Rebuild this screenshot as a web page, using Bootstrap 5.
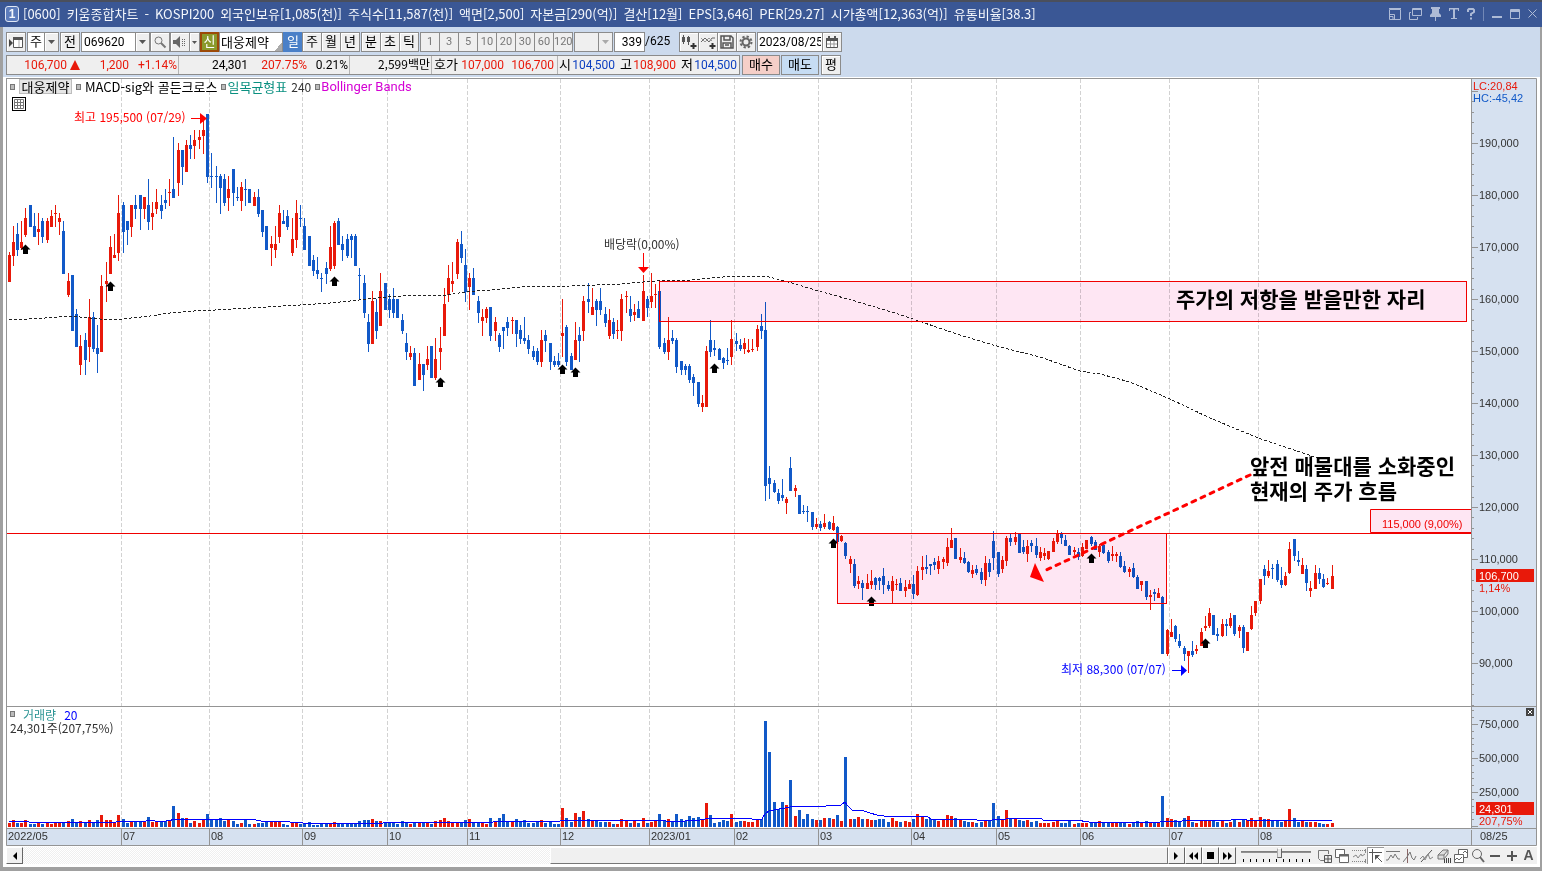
<!DOCTYPE html>
<html lang="ko">
<head>
<meta charset="utf-8">
<meta name="viewport" content="width=device-width, initial-scale=1">
<title>[0600] 키움종합차트</title>
<link href="https://cdn.jsdelivr.net/npm/bootstrap@5.3.0/dist/css/bootstrap.min.css" rel="stylesheet">
<style>
:root { --up:#e8190a; --down:#1159c8; --panel:#ccdaed; --axis:#d6e1f0; --rule:#949494; }
body { font-family:"Noto Sans CJK KR",sans-serif; font-size:13px; line-height:18px; color:#000; background:#fff; }
.win { border:solid #a0a0a0; border-width:0 2px 4px 3px; }
.titlebar { height:27px; margin:0 -2px 0 -3px; background:#3a5795; color:#f4f7fc; border-top:2px solid #4a4f5c; padding:0 5px 2px; }
.titlebar .cap { gap:6px; white-space:nowrap; }
.box-no { width:14px; height:16px; border:1px solid #dfe7f5; border-radius:3px; background:#5c7cbc; font:bold 12px/14px "Liberation Sans",sans-serif; text-align:center; }
.titlebar button { background:none; border:0; padding:0; line-height:0; color:#aebbd6; }
.tools { background:var(--panel); height:50px; padding:5px 3px 0; white-space:nowrap; }
.tools svg, .bottombar svg { display:block; margin:auto; flex:none; }
.row-a { margin-bottom:3px; }
.row-b { gap:1px; }
.bt { height:20px; padding:0 0 2px; border:1px solid #8b8b8b; border-radius:0; background:#efefef; font-size:13px; line-height:16px; color:#000; box-shadow:inset 1px 1px #fff; flex:none; overflow:hidden; }
.bt.j { margin-left:-1px; }
.bt.g, .fld.g { margin-left:1px; }
.bt:has(svg) { padding:0; }
.bt.on { background:#4a80c8; color:#fff; box-shadow:none; border-color:#4a80c8; }
.bt.off { color:#777; box-shadow:none; font-family:Roboto,sans-serif; font-size:11px; padding:0; }
.w20 { width:20px; } .w18 { width:18px; } .w15 { width:15px; } .w11 { width:11px; } .w38 { width:38px; }
.fld { height:20px; border:1px solid #8b8b8b; border-radius:0; background:#fff; padding:0 2px; font-family:Roboto,"Noto Sans CJK KR",sans-serif; font-size:12px; line-height:18px; color:#000; flex:none; appearance:none; }
.fld.name { width:64px; font-size:13px; padding:0 1px 2px; background:linear-gradient(135deg,#fff 50%,#aaa 50%) 100% 100%/8px 8px no-repeat #fff; }
.bt.new { width:19px; border:2px solid #9c4a08; background:#8a9a2c; color:#fff; box-shadow:none; line-height:14px; }
.quote { width:734px; height:20px; border:1px solid #8b8b8b; background:#efefef; line-height:16px; margin-right:1px; }
.quote > div { display:flex; border-right:1px solid #b4b4b4; height:100%; flex:none; }
.quote > div:last-child { border:0; }
.quote span { text-align:right; flex:none; }
.quote .fig, .total { font-family:Roboto,"Noto Sans CJK KR",sans-serif; font-size:12px; line-height:18px; }
.up { color:var(--up); } .dn { color:#0c3fc0; }
.frame { margin:0 3px; position:relative; }
.frame > svg { display:block; width:100%; height:auto; }
.legend-row { position:absolute; left:4px; top:2px; gap:4px; line-height:14px; }
.sq { width:5px; height:6px; border:1px solid #777; background:#bbb; flex:none; }
.legend-row button { border:1px solid #bdbdbd; background:#e6e6e6; padding:0 1px; line-height:13px; font-size:13px; height:15px; width:53px; }
.ma { color:#333; font-size:12px; }
.gridbtn { position:absolute; left:6px; top:20px; width:14px; height:14px; border:1px solid #000; background:#fff; padding:1px; line-height:0; }
.volhead { position:absolute; left:4px; top:82%; line-height:13px; font-size:12px; }
.cl { position:absolute; right:3px; top:82%; width:8px; height:8px; border:0; background:#444; padding:0; line-height:0; }
.bottombar { height:17px; margin:1px 3px 3px; background:#f0f0f0; }
.track { background:repeating-conic-gradient(#efefef 0 25%,#fff 0 50%) 0 0/2px 2px; display:flex; }
.track .thumb { width:54%; margin-left:auto; background:#f0f0f0; border:1px solid; border-color:#fff #777 #777 #fff; }
.sb { width:17px; height:17px; padding:0; background:#f0f0f0; border:1px solid; border-color:#fff #666 #666 #fff; flex:none; line-height:0; }
.ic { width:17px; height:17px; padding:0; border:0; background:none; flex:none; line-height:0; }
.ic.pressed { background:#fff; border-left:1px solid #999; border-top:1px solid #999; }
.zoomer { width:80px; padding:1px 5px 0; }
.zoomer input { appearance:none; display:block; width:70px; height:10px; margin:0; background:linear-gradient(#777,#999) 0 3px/100% 2px no-repeat; }
.zoomer input::-webkit-slider-thumb { appearance:none; width:5px; height:10px; background:#e8e8e8; border:1px solid; border-color:#fff #666 #666 #aaa; }
.ticks { height:3px; margin:1px 1px 0 2px; display:flex; justify-content:space-between; }
.ticks i { width:1px; background:#000; }
svg text { font-size:12px; white-space:pre; }
svg .fig { font-family:"Liberation Sans",sans-serif; font-size:11px; }
svg .note { font:bold 21px "Noto Sans CJK KR",sans-serif; }
</style>
</head>
<body>
<div class="win">
  <header class="titlebar d-flex align-items-center">
    <span class="box-no me-1">1</span>
    <div class="cap d-flex flex-grow-1 overflow-hidden">
      <span>[0600]</span><span>키움종합차트</span><span>-</span><span>KOSPI200</span><span>외국인보유[1,085(천)]</span><span>주식수[11,587(천)]</span><span>액면[2,500]</span><span>자본금[290(억)]</span><span>결산[12월]</span><span>EPS[3,646]</span><span>PER[29.27]</span><span>시가총액[12,363(억)]</span><span>유통비율[38.3]</span>
    </div>
    <div class="d-flex align-items-center gap-2">
      <button aria-label="크기"><svg width="12" height="12" fill="none" stroke="currentColor"><path d="M.5 1.500h11v10H.5zM0 .5h12M.5 6.500h5v5" /><path d="M1 8.500h3v3" /></svg></button>
      <button aria-label="복제"><svg width="13" height="12" fill="none" stroke="currentColor"><path d="M3.500.5h9v7h-9zM3 1.500h10M2 4.500H.5v7h8V9" /></svg></button>
      <button aria-label="고정"><svg width="11" height="14" fill="currentColor"><path d="M1 0h9v2H9v4l2 2v2H6v4H5v-4H0V8l2-2V2H1z" /></svg></button>
      <button aria-label="글꼴"><svg width="10" height="12" fill="currentColor"><path d="M0 0h10v3H9V1.500H6V10h2v1H2v-1h2V1.500H1V3H0z" /></svg></button>
      <button aria-label="도움말"><svg width="8" height="12" fill="none" stroke="currentColor" stroke-width="2"><path d="M1 4V2l1-1h4l1 1v2L4 6v2M4 9.500v2" /></svg></button>
      <svg width="1" height="14"><path d="M.5 0v14" stroke="#7288b6"/></svg>
      <button aria-label="최소화"><svg width="10" height="10" fill="currentColor"><path d="M0 7h10v2H0z" /></svg></button>
      <button aria-label="최대화"><svg width="10" height="10" fill="none" stroke="currentColor"><path d="M.5.5h9v9h-9zM0 1.500h10M0 2.500h10" /></svg></button>
      <button aria-label="닫기"><svg width="9" height="9" stroke="currentColor"><path d="M.5.5l8 8M8.500.5l-8 8" /></svg></button>
    </div>
  </header>

  <div class="tools">
    <div class="row-a d-flex">
      <button class="bt w20" aria-label="패널"><svg width="14" height="14"><path d="M4.500 2.500h9v10h-9z" fill="#fff" stroke="#555"/><path d="M4 2h10v3H4z" fill="#555"/><path d="M10 5v7" stroke="#aaa"/><path d="M0 4l4 4-4 4z" fill="#444"/></svg></button>
      <button class="bt g w18 bg-white">주</button><button class="bt j w15" aria-label="종류"><svg width="7" height="4"><path d="M0 0h7L3.500 4z" fill="#555"/></svg></button>
      <button class="bt g w20">전</button>
      <input class="fld g" style="width:55px" value="069620" aria-label="종목코드"><button class="bt j w15" aria-label="종목 목록"><svg width="7" height="4"><path d="M0 0h7L3.500 4z" fill="#555"/></svg></button>
      <button class="bt w20" aria-label="검색"><svg width="14" height="14" fill="none" stroke="#777"><circle cx="5.500" cy="5.500" r="3.500"/><path d="M8 8l4.500 4.500" stroke-width="2"/></svg></button>
      <button class="bt w20" aria-label="소리"><svg width="14" height="12"><path d="M0 4h3l4-4v12L3 8H0z" fill="#666"/><path d="M9.500 3v7M11.500 3v7" stroke="#666" stroke-dasharray="1 1"/></svg></button><button class="bt j w11" aria-label="소리 메뉴"><svg width="5" height="3"><path d="M0 0h5L2.500 3z" fill="#555"/></svg></button>
      <button class="bt new">신</button><input class="fld name" value="대웅제약" aria-label="종목명">
      <button class="bt w20 on">일</button><button class="bt j w20">주</button><button class="bt j w20">월</button><button class="bt j w20">년</button>
      <button class="bt g w20">분</button><button class="bt j w20">초</button><button class="bt j w20">틱</button>
      <button class="bt g w20 off">1</button><button class="bt j w20 off">3</button><button class="bt j w20 off">5</button><button class="bt j w20 off">10</button><button class="bt j w20 off">20</button><button class="bt j w20 off">30</button><button class="bt j w20 off">60</button><button class="bt j w20 off">120</button>
      <select class="fld g" style="width:25px;background:#efefef" aria-label="주기" disabled><option></option></select><button class="bt j w15 off" aria-label="주기 목록"><svg width="7" height="4"><path d="M0 0h7L3.500 4z" fill="#aaa"/></svg></button>
      <input class="fld g text-end" style="width:31px" value="339" aria-label="표시 개수"><span class="total" style="width:34px">/625</span>
      <button class="bt w20" aria-label="봉 추가"><svg width="16" height="16"><path d="M2.500 1v9M7.500 2v9" stroke="#555"/><path d="M1 3h3v5H1zM6 3h3v5H6z" fill="#555"/><path d="M12.500 9v6M9.500 12h6" stroke="#333" stroke-width="2"/></svg></button><button class="bt j w20" aria-label="지표 추가"><svg width="16" height="16" fill="none"><path d="M1 8l4-4 4 4 3-4 3 0" stroke="#666"/><path d="M1 4l4 4 4-4 3 3" stroke="#999"/><path d="M12.500 9v6M9.500 12h6" stroke="#333" stroke-width="2"/></svg></button><button class="bt j w20" aria-label="저장"><svg width="14" height="14" fill="none" stroke="#555"><path d="M1 1h10l2 2v10H1zM4 1v4h6V1M3 13V8h8v5M5 10h4" stroke-width="1.500"/></svg></button><button class="bt j w20" aria-label="설정"><svg width="14" height="14" fill="none" stroke="#666"><circle cx="7" cy="7" r="3.500" stroke-width="2"/><circle cx="7" cy="7" r="5.500" stroke-width="2" stroke-dasharray="2.300 2"/></svg></button>
      <input class="fld g" style="width:66px;padding:0 1px" value="2023/08/25" aria-label="날짜"><button class="bt j w20" aria-label="달력"><svg width="12" height="12"><path d="M.5 2.500h11v9H.5z" fill="#fff" stroke="#555"/><path d="M0 2h12v3H0zM2 0h2v3H2zM8 0h2v3H8z" fill="#555"/><path d="M4.500 5v6M8 5v6M1 8h10" stroke="#999"/></svg></button>
    </div>
    <div class="row-b d-flex">
      <div class="quote d-flex">
        <div style="width:172px"><span class="up fig" style="width:60px">106,700</span><svg class="m-0 align-self-center" width="14" height="10"><path d="M3 10h10L8 0z" fill="#e8190a"/></svg><span class="up fig" style="width:48px">1,200</span><span class="up fig" style="width:48px">+1.14%</span></div>
        <div style="width:171px"><span class="fig" style="width:69px">24,301</span><span class="up fig" style="width:59px">207.75%</span><span class="fig" style="width:41px">0.21%</span></div>
        <div style="width:82px"><span style="width:80px;font-size:12px">2,599백만</span></div>
        <div style="width:126px"><span style="width:26px">호가</span><span class="up fig" style="width:46px">107,000</span><span class="up fig" style="width:50px">106,700</span></div>
        <div><span style="width:13px">시</span><span class="dn fig" style="width:44px">104,500</span><span style="width:17px">고</span><span class="up fig" style="width:44px">108,900</span><span style="width:17px">저</span><span class="dn fig" style="width:44px">104,500</span></div>
      </div>
      <button class="bt w38 shadow-none" style="background:#f5cfc8">매수</button>
      <button class="bt w38 shadow-none" style="background:#c6dcf3">매도</button>
      <button class="bt g w20">평</button>
    </div>
  </div>

  <main class="frame">
    <svg id="chart" viewBox="6 77 1531 769" role="img" aria-label="대웅제약 일봉 차트"></svg>
    <div class="legend-row d-flex align-items-center">
      <i class="sq"></i><button>대웅제약</button><i class="sq"></i><span>MACD-sig와 골든크로스</span><i class="sq"></i><span style="color:#0a9080;margin-left:-3px">일목균형표</span><span class="ma">240</span><i class="sq"></i><span style="color:#d400d4;margin-left:-3px;font-family:Roboto,sans-serif">Bollinger Bands</span>
    </div>
    <button class="gridbtn" aria-label="표"><svg width="10" height="10" fill="none" stroke="#777"><path d="M.5.5h9v9h-9zM3.500 0v10M6.500 0v10M0 3.500h10M0 6.500h10"/></svg></button>
    <div class="volhead">
      <div class="d-flex align-items-center"><i class="sq me-2"></i><span style="color:#2a9494;margin-right:8px">거래량</span><span style="color:#00f">20</span></div>
      <div style="color:#333">24,301주(207,75%)</div>
    </div>
    <button class="cl" aria-label="닫기"><svg width="8" height="8" stroke="#fff"><path d="M2 2l4 4M6 2l-4 4"/></svg></button>
  </main>

  <footer class="bottombar d-flex">
    <button class="sb" aria-label="왼쪽"><svg width="5" height="8"><path d="M5 0v8L1 4z"/></svg></button>
    <div class="track flex-grow-1"><div class="thumb"></div></div>
    <button class="sb" aria-label="오른쪽"><svg width="5" height="8"><path d="M0 0v8l4-4z"/></svg></button>
    <button class="sb" aria-label="처음"><svg width="9" height="8"><path d="M4 0v8L0 4zM9 0v8L5 4z"/></svg></button>
    <button class="sb" aria-label="정지"><svg width="7" height="7"><path d="M0 0h7v7H0z"/></svg></button>
    <button class="sb" aria-label="끝"><svg width="9" height="8"><path d="M0 0v8l4-4zM5 0v8l4-4z"/></svg></button>
    <div class="zoomer"><input type="range" value="56" aria-label="확대"><div class="ticks"><i></i><i></i><i></i><i></i><i></i><i></i><i></i><i></i><i></i><i></i><i></i></div></div>
    <button class="ic" aria-label="추가"><svg width="14" height="14" fill="none" stroke="#777"><path d="M6 11.500H2.500l-2-2V1.500h10V5" /><path d="M6.500 6.500h7v7h-7zM10 6.500v7M6.500 10h7" stroke="#555"/></svg></button>
    <button class="ic" aria-label="겹치기"><svg width="14" height="14" fill="#fff" stroke="#666"><path d="M.5.5h9v8h-9z"/><path d="M4.500 5.500h9v8h-9z"/><path d="M4 6.500h10" stroke-width="2"/></svg></button>
    <button class="ic" aria-label="범위"><svg width="14" height="14" fill="none" stroke="#888"><path d="M0 1.500h14M0 12.500h14" stroke-dasharray="1 1"/><path d="M13.500 0v4M13.500 10v4M1 8l3-2 2 3 3-4 1 2 3-2"/></svg></button>
    <button class="ic pressed" aria-label="선택"><svg width="14" height="14" fill="none" stroke="#555"><path d="M0 3.500h13M3.500 0v14M7 7l6 6"/><path d="M6 6h5l-5 5z" fill="#555" stroke="none"/></svg></button>
    <button class="ic" aria-label="수평선"><svg width="14" height="14" fill="none" stroke="#777"><path d="M0 2.500h14"/><path d="M0 11h2l3-5 2 3 2-4 3 5h2"/></svg></button>
    <button class="ic" aria-label="수직선"><svg width="14" height="14" fill="none" stroke="#777"><path d="M4.500 0v14" stroke="#866"/><path d="M0 13l4-5 3-5 2 6 2 2 2-4"/></svg></button>
    <button class="ic" aria-label="추세선"><svg width="14" height="14" fill="none" stroke="#888"><path d="M1 13L12 1" stroke="#555"/><path d="M0 10l3-3 2 4 3-6 2 5 3-2"/></svg></button>
    <button class="ic" aria-label="모두 지우기"><svg width="14" height="14" fill="#ddd" stroke="#777"><path d="M1 6l5-5h5L7 6zM1 6v4h6V6M7 10l4-5V1"/><path d="M7.500 14v-4M9.500 9v5M11.500 9v5M13.500 9v5" stroke="#444"/></svg></button>
    <button class="ic" aria-label="차트 복사"><svg width="14" height="14" fill="#fff" stroke="#666"><path d="M4.500.5h9v8h-9z"/><path d="M.5 5.500h9v8h-9z"/><path d="M1 11l2-2 2 2 3-3M9 4l2-2 2 2" fill="none"/></svg></button>
    <button class="ic" aria-label="돋보기"><svg width="14" height="14" fill="none" stroke="#666"><circle cx="6" cy="5" r="4.500"/><path d="M9 8l4 5" stroke-width="2"/></svg></button>
    <button class="ic" aria-label="축소"><svg width="10" height="10"><path d="M0 4h10v2H0z" fill="#555"/></svg></button>
    <button class="ic" aria-label="확대"><svg width="10" height="10"><path d="M0 4h10v2H0zM4 0h2v10H4z" fill="#555"/></svg></button>
    <button class="ic" aria-label="자동" style="font:bold 14px/17px 'Liberation Sans',sans-serif;color:#555">A</button>
  </footer>
</div>

<script>
// One candle per entry: x high bodyTop bodyBottom low direction volume
const days = `9 252 255 282 282 r 4;13 226 242 256 266 r 7;17 223 234 250 256 b 4;21 221 242 248 250 r 4;25 208 218 235 237 r 7;30 205 205 227 227 b 3;34 213 226 237 237 b 3;38 213 229 232 245 r 5;42 218 221 237 243 b 3;47 218 221 240 243 r 5;51 210 216 227 227 r 3;55 205 213 214 227 r 4;59 213 218 222 235 r 4;63 221 231 274 274 b 5;68 273 281 295 297 r 6;72 275 275 331 331 b 8;76 309 314 347 347 b 5;80 335 346 365 375 r 6;85 333 340 360 375 b 5;89 299 317 347 362 r 7;93 312 317 349 352 b 5;97 325 348 354 373 b 7;101 275 286 352 352 r 12;106 262 281 284 302 r 7;110 236 247 274 274 r 7;114 234 255 258 258 r 5;118 195 213 253 261 r 12;123 202 205 232 253 b 8;127 221 221 230 245 b 4;131 205 205 227 237 r 6;135 195 205 209 219 b 5;140 195 195 209 230 b 5;144 197 197 209 219 r 6;148 179 205 222 230 b 10;152 202 213 217 230 r 5;156 189 202 209 214 r 6;161 195 205 211 219 b 6;165 189 200 203 209 b 6;169 179 192 193 206 r 6;173 137 189 198 198 b 21;178 143 150 183 196 r 14;182 150 150 167 185 b 9;186 140 145 172 172 r 9;190 135 145 149 159 b 4;194 130 140 146 159 r 6;199 130 137 140 149 r 4;203 121 130 136 154 r 7;207 114 114 177 183 b 13;211 153 176 177 188 b 8;216 166 176 177 203 b 8;220 174 176 188 214 b 9;224 174 179 203 206 b 6;228 176 189 198 211 r 7;233 169 169 193 206 b 6;237 187 197 198 201 b 3;241 182 187 201 211 r 4;245 179 189 190 206 b 7;249 189 189 203 203 b 3;254 192 197 206 206 r 3;258 189 197 214 217 b 4;262 210 210 232 237 b 4;266 226 226 250 250 b 6;271 236 244 248 266 r 6;275 226 244 250 258 r 6;279 205 213 237 243 r 6;283 210 221 224 224 b 3;287 210 216 227 230 b 2;292 218 239 253 256 r 4;296 200 213 240 248 r 4;300 205 218 219 227 b 3;304 218 226 250 250 b 4;309 236 236 266 266 b 5;313 255 260 271 276 b 2;317 257 270 274 279 b 2;321 273 278 279 292 b 4;326 262 268 274 284 b 4;330 226 247 269 271 r 4;334 221 223 266 269 r 5;338 218 221 245 245 b 4;342 236 244 250 261 b 4;347 234 239 256 258 b 4;351 234 236 240 258 b 4;355 234 236 266 266 b 4;359 268 275 276 300 b 6;364 275 283 313 318 b 7;368 314 322 344 352 b 7;372 291 301 344 344 r 8;376 299 312 331 339 b 6;380 273 291 326 326 r 6;385 283 283 310 310 b 5;389 294 299 310 318 b 4;393 288 299 313 318 b 4;397 299 299 318 318 b 3;402 314 320 331 334 b 6;406 333 343 352 360 b 5;410 346 353 357 360 r 3;414 348 353 386 386 b 4;419 353 364 380 380 r 4;423 364 364 375 391 b 4;427 346 359 365 370 r 5;431 346 346 378 378 b 3;435 338 359 378 380 r 6;440 327 348 352 370 r 7;444 288 304 336 336 r 9;448 265 278 295 302 r 6;452 262 281 284 292 r 5;457 239 242 274 279 r 5;461 231 244 258 263 b 5;465 249 265 292 302 b 7;469 273 278 287 310 r 8;473 268 278 295 295 b 5;478 296 301 313 323 b 5;482 309 317 321 336 r 4;486 307 309 318 323 r 3;490 307 307 336 341 b 9;495 317 322 331 341 r 6;499 333 335 347 352 b 9;503 327 327 331 349 b 13;507 317 322 328 336 b 6;512 317 320 321 334 r 5;516 320 320 334 347 b 8;520 325 330 339 344 b 6;524 317 338 341 344 b 7;528 335 340 349 354 b 4;533 346 351 357 360 b 4;537 348 351 362 365 b 6;541 330 340 362 367 r 7;545 330 335 341 352 b 4;550 343 343 362 370 b 5;554 356 361 365 367 b 3;558 353 361 365 367 b 3;562 299 333 336 357 r 19;566 325 327 362 366 b 9;571 353 356 370 370 b 5;575 322 340 360 360 r 14;579 327 335 341 362 b 10;583 296 301 331 341 r 16;588 283 299 302 313 b 8;592 288 307 315 315 r 7;596 299 301 310 326 b 6;600 288 301 310 315 b 5;605 307 314 323 327 b 5;609 309 320 336 339 r 5;613 318 322 334 339 b 3;617 320 330 331 339 r 3;621 294 299 331 341 r 8;626 291 296 297 313 r 7;630 296 309 316 322 b 4;634 304 312 315 321 r 6;638 301 309 318 318 b 4;643 275 291 321 321 r 9;647 296 299 308 317 b 4;651 273 296 302 308 r 5;655 284 294 295 308 r 6;659 291 291 347 349 b 13;664 338 343 352 354 b 7;668 317 340 352 360 r 8;672 330 338 341 344 b 5;676 338 340 367 373 b 13;681 361 361 370 375 b 8;685 364 366 370 375 b 6;689 364 366 380 383 b 11;693 374 377 383 396 b 9;698 382 382 404 407 b 10;702 395 403 407 412 r 8;706 346 351 407 407 r 24;710 320 340 352 357 b 12;714 340 348 350 356 b 4;719 348 349 360 360 b 5;723 357 358 363 369 b 7;727 348 360 361 365 b 6;731 320 339 357 365 r 13;736 333 341 344 351 b 5;740 339 345 349 351 b 6;744 338 343 349 354 r 6;748 339 350 352 353 r 5;752 339 349 350 352 r 5;757 325 329 347 351 r 7;761 314 326 331 339 b 8;765 302 330 486 501 b 106;769 466 478 484 499 b 75;774 480 483 492 493 b 25;778 489 493 501 504 b 18;782 479 495 498 501 b 25;786 497 499 503 514 r 22;790 457 468 491 491 b 47;795 485 488 491 497 r 11;799 495 495 514 514 b 17;803 505 511 512 514 b 8;807 506 511 512 522 b 13;812 512 512 527 530 b 8;816 518 524 527 529 r 7;820 521 524 528 531 b 7;824 514 523 527 529 r 9;829 521 522 529 530 b 9;833 516 523 530 531 r 8;837 526 527 542 542 b 12;841 535 536 541 542 r 6;845 542 543 556 559 b 70;850 556 559 564 573 r 8;854 559 564 586 588 b 8;858 576 581 584 589 r 10;862 580 583 588 600 b 8;867 574 583 589 589 r 8;871 570 581 585 589 r 7;875 577 578 585 590 b 7;879 577 578 581 590 b 8;883 568 576 585 594 b 8;888 581 585 589 591 b 5;892 576 581 591 604 r 9;896 579 584 585 590 r 6;900 578 583 591 591 b 5;905 580 587 591 597 r 6;909 580 584 589 589 r 5;913 575 584 594 599 b 8;917 566 571 595 596 r 13;922 556 567 570 580 r 11;926 555 567 569 574 b 8;930 564 564 566 575 b 8;934 558 562 565 570 b 8;938 556 561 569 574 r 6;943 557 559 562 569 r 7;947 538 547 563 566 r 12;951 528 540 548 548 r 11;955 538 538 559 559 b 9;960 548 557 560 563 r 8;964 552 558 563 564 b 6;968 561 562 572 573 b 5;972 565 570 574 578 r 5;976 565 569 573 575 b 4;981 568 572 580 584 b 5;985 556 563 580 586 r 6;989 559 563 572 577 b 6;993 531 541 558 570 b 24;998 552 552 574 577 b 11;1002 556 560 569 573 r 8;1006 536 538 561 566 r 17;1010 534 538 542 546 b 8;1015 532 537 542 545 r 8;1019 533 533 553 553 b 7;1023 540 547 552 554 b 6;1027 540 546 554 562 r 7;1031 540 543 546 552 b 5;1036 538 546 555 558 b 6;1040 547 552 558 561 r 4;1044 548 553 556 560 r 4;1048 551 551 559 560 r 4;1053 538 541 552 552 r 5;1057 530 534 542 544 r 6;1061 532 533 538 544 b 4;1065 535 540 546 546 b 4;1069 545 546 555 555 b 6;1074 547 550 552 555 r 3;1078 548 552 557 560 b 4;1082 543 547 556 557 r 4;1086 540 540 549 549 r 4;1091 536 537 544 546 b 5;1095 540 542 550 550 b 4;1099 544 546 552 557 r 6;1103 544 545 553 554 b 4;1108 550 552 561 563 b 5;1112 546 554 556 561 r 4;1116 552 554 556 562 r 4;1120 552 556 567 568 b 4;1124 561 566 572 573 b 4;1129 567 569 572 577 r 3;1133 563 568 577 578 b 5;1137 575 577 589 589 b 6;1141 581 581 585 591 r 4;1146 581 581 597 600 b 6;1150 590 595 597 610 r 5;1154 589 592 594 601 b 4;1158 588 593 598 598 r 4;1162 596 597 654 654 b 31;1167 629 630 654 656 r 9;1171 619 632 637 637 r 8;1175 625 626 639 642 b 7;1179 634 641 646 648 b 6;1184 646 648 654 661 b 9;1188 651 651 656 673 r 11;1192 641 651 655 657 b 5;1196 645 649 651 654 r 4;1201 628 632 646 646 r 6;1205 616 626 628 631 r 6;1209 608 613 626 628 r 6;1213 615 615 635 635 b 6;1217 628 634 636 641 b 5;1222 619 624 636 637 r 7;1226 619 624 626 636 b 4;1230 613 618 626 628 r 5;1234 615 615 634 636 b 8;1239 625 627 631 638 r 5;1243 625 627 648 653 b 8;1247 632 632 651 651 r 7;1251 606 615 629 630 r 9;1255 601 601 613 616 r 7;1260 579 579 601 604 r 10;1264 565 569 576 585 b 8;1268 560 571 576 578 r 8;1272 564 568 569 579 b 6;1277 560 564 580 582 b 6;1281 567 580 585 588 b 5;1285 572 576 585 586 r 7;1289 542 549 573 574 r 18;1294 539 539 556 561 b 9;1298 551 560 562 566 b 5;1302 558 565 574 574 r 6;1306 565 569 583 591 b 5;1310 581 588 591 597 r 5;1315 565 573 589 589 r 5;1319 568 573 579 584 b 4;1323 574 579 587 588 b 3;1327 578 583 584 585 r 3;1332 565 576 589 589 r 4`.split(';').map(s => s.split(' '));
const months = {121:'07',209:'08',302:'09',387:'10',467:'11',560:'12',649:'2023/01',734:'02',818:'03',911:'04',996:'05',1080:'06',1169:'07',1258:'08'};
const color = {r:'#e8190a', b:'#1159c8'};
const rect = (x,y,w,h,f,extra='') => `<rect x="${x}" y="${y}" width="${w}" height="${h}" fill="${f}" ${extra}/>`;
const text = (x,y,s,f,cls='') => `<text x="${x}" y="${y}" fill="${f}" class="${cls}">${s}</text>`;
let g = rect(6,77,1531,769,'#fff') + rect(1471,79,65,767,'#d6e1f0') + rect(6,829,1530,17,'#d6e1f0');

for (const x in months) g += `<path d="M${+x + .5} 79V827" stroke="#d2d2d2" stroke-dasharray="4 2"/>`;
g += '<g shape-rendering="crispEdges">';
for (const [x,h,t,b,l,d,v] of days) {
  g += rect(x,h,1,l-h,color[d]) + rect(x-1,t,3,b-t,color[d]) + rect(x-1,827-v,3,v,color[d]);
}
g += '<polyline fill="none" stroke="#222" stroke-dasharray="3 2" points="9,320 45,318 70,316 80,317 100,319 122,319 150,316 170,313 194,311 215,310 250,308 300,305 330,303 350,301 386,297 420,295 447,295 465,292 490,290 520,287 570,286 620,284 655,281 690,280 710,278 736,276 765,276 785,281 815,290 855,301 898,314 960,335 1000,347 1040,357 1080,371 1100,374 1130,382 1170,399 1210,418 1258,438 1300,452 1320,459"/>';
g += '<polyline fill="none" stroke="#00f" points="9,821 28,821 29,822 53,822 54,823 70,822 116,822 117,821 146,821 147,820 155,821 166,821 177,819 196,820 205,819 251,819 261,821 289,821 290,822 303,823 383,823 384,822 493,822 494,821 560,821 561,820 665,820 666,821 685,821 700,820 710,818 751,818 752,819 762,819 765,814 769,811 790,807 798,806 826,806 841,805 845,802 848,806 852,810 864,811 870,813 877,815 884,816 927,816 931,819 943,820 946,819 974,819 977,820 992,820 1020,818 1042,819 1043,820 1076,820 1089,822 1140,822 1158,823 1162,821 1182,821 1183,820 1231,820 1233,819 1245,819 1247,820 1270,820 1272,821 1280,820 1332,820"/></g>';
// golden-cross markers
for (const [x,y] of [[25,245],[110,282],[334,277],[440,378],[562,365],[575,368],[714,364],[833,539],[871,597],[1091,554],[1205,639]])
  g += `<path d="M${x+.5} ${y-.5}l5 5h-2.500v4.500h-5v-4.500h-2.500z"/>`;

// supply zones and resistance line
for (const [x,y,w,h] of [[659.5,281.5,807,40],[837.5,533.5,329,70]])
  g += rect(x,y,w,h,'#fee6f3','style="mix-blend-mode:multiply"') + rect(x,y,w,h,'none','stroke="#f00000"');
g += '<path d="M6 533.500H1471" stroke="#f00000"/>';
g += '<path d="M1471 509.500H1370.500V532.500H1471" fill="#fee6f3" stroke="#f00000"/>' + text(1382,528,'115,000 (9,00%)','#f00000','fig');
g += '<path d="M1250 475L1042 572" stroke="#f00" stroke-width="3" stroke-dasharray="4 6" stroke-linecap="round"/><path d="M1035 563l-5 14 14 5z" fill="#f00"/>';
g += text(1176,307,'주가의 저항을 받을만한 자리','#000','note') + text(1250,474,'앞전 매물대를 소화중인','#000','note') + text(1250,499,'현재의 주가 흐름','#000','note');
g += text(74,122,'최고 195,500 (07/29)','#f00') + '<path d="M191 118.500h10" stroke="#f00"/><path d="M200 113l7 5.500-7 5.500z" fill="#f00"/>';
g += text(1061,674,'최저 88,300 (07/07)','#00f') + '<path d="M1172 670.500h10" stroke="#00f"/><path d="M1181 665l6 5.500-6 5.500z" fill="#00f"/>';
g += text(604,249,'배당락(0,00%)','#333') + '<path d="M643.500 253v15" stroke="#f00"/><path d="M638 267h11l-5.500 6z" fill="#f00"/>';

// frame and axes
g += '<g stroke="#949494" fill="none"><path d="M6 78.500H1536.500V845.500H6.500V78.500M6 706.500H1536M6 828.500H1536M1471.500 78V828M1471.500 830V845"/>';
for (const x in months) g += `<path d="M${+x + .5} 829V845"/>`;
for (let i = -5; i < 55; i++) { const y = Math.round(143 + i*10.4) + .5; g += `<path d="M1472 ${y}h${i%5 ? 2 : 6}"/>`; }
for (let i = -2; i < 16; i++) { const y = Math.round(724 + i*6.8) + .5; g += `<path d="M1472 ${y}h${i%5 ? 2 : 6}"/>`; }
g += '</g>';
for (let i = 0; i < 11; i++) g += text(1479,147+i*52,(190-i*10)+',000','#333','fig');
g += text(1479,728,'750,000','#333','fig') + text(1479,762,'500,000','#333','fig') + text(1479,796,'250,000','#333','fig');
g += text(1473,90,'LC:20,84','#e8190a','fig') + text(1473,102,'HC:-45,42','#1159c8','fig');
g += text(1479,592,'1,14%','#e8190a','fig') + rect(1476,569,58,13,'#e8190a') + text(1479,580,'106,700','#fff','fig');
g += text(1479,825,'207,75%','#e8190a','fig') + rect(1476,802,58,13,'#e8190a') + text(1479,813,'24,301','#fff','fig');
g += text(8,840,'2022/05','#333','fig') + text(1480,840,'08/25','#333','fig');
for (const x in months) g += text(+x+2,840,months[x],'#333','fig');
document.getElementById('chart').innerHTML = g;
</script>
<script src="https://cdn.jsdelivr.net/npm/bootstrap@5.3.0/dist/js/bootstrap.bundle.min.js"></script>
</body>
</html>
